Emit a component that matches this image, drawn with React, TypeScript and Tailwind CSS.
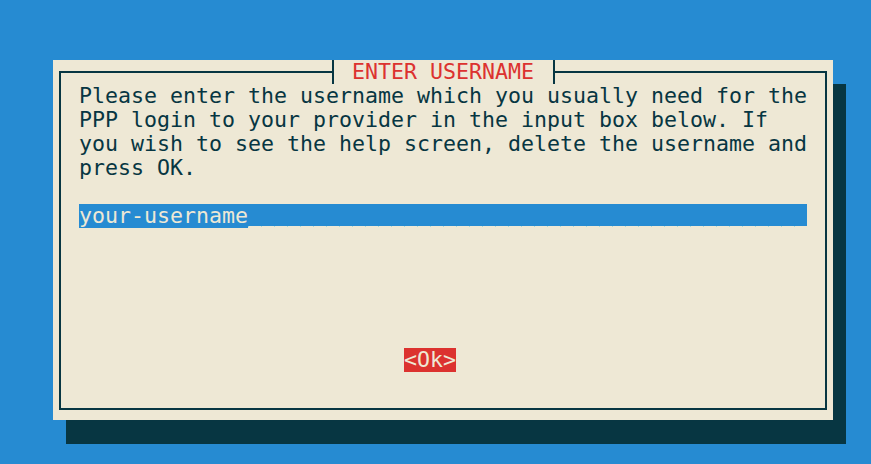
import React from 'react';

const lines = [
  'Please enter the username which you usually need for the',
  'PPP login to your provider in the input box below. If',
  'you wish to see the help screen, delete the username and',
  'press OK.',
];

export default function App() {
  return (
    <div className="w-[871px] h-[464px] overflow-hidden bg-[#268bd2] pt-[60px] pl-[53px] font-['DejaVu_Sans_Mono',monospace] text-[21.6px] leading-[24px]">
      <div className="w-[780px] h-[360px] bg-[#eee8d5] shadow-[13px_24px_0_0_#073642] px-[6px] pt-[11px] pb-[10px]">
        <div className="relative h-full border-2 border-[#073642] pl-[18px] pt-[11px]">
          {/* title sits over the top border */}
          <div className="absolute top-[-13px] left-[265px] flex h-[24px] w-[234px]">
            <div className="w-[6px]" />
            <div className="w-[2px] bg-[#073642]" />
            <div className="w-[219px] bg-[#eee8d5] pl-[18px] text-[#dc322f] whitespace-pre">ENTER USERNAME</div>
            <div className="w-[2px] bg-[#073642]" />
          </div>

          <div className="text-[#073642] whitespace-pre">
            {lines.map(l => (
              <div key={l} className="h-[24px]">{l}</div>
            ))}
          </div>

          <div className="mt-[24px] flex w-[728px] h-[24px]">
            <span className="h-[24px] bg-[#268bd2] text-[#eee8d5] whitespace-pre">your-username</span>
            <div className="flex flex-1 flex-col">
              <div className="h-[22px] bg-[#268bd2]" />
              <div className="h-[1px] bg-[repeating-linear-gradient(90deg,#a9d9d6_0_1px,transparent_1px_13px)]" />
            </div>
          </div>

          <div className="mt-[120px] ml-[325px] w-fit h-[24px] bg-[#dc322f] text-[#eee8d5] whitespace-pre">
            {'<Ok>'}
          </div>
        </div>
      </div>
    </div>
  );
}
